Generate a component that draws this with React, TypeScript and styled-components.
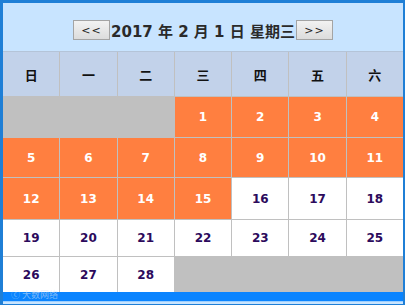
import React from "react";
import styled, { createGlobalStyle } from "styled-components";

const Global = createGlobalStyle`
  html, body { margin: 0; padding: 0; background: #ffffff; }
  * { box-sizing: border-box; }
`;

const Frame = styled.div`
  width: 405px;
  height: 305px;
  border-left: 3px solid #1f7fd6;
  border-top: 3px solid #1f7fd6;
  border-right: 2px solid #1f7fd6;
  border-bottom: 1px solid #1f7fd6;
  display: flex;
  flex-direction: column;
  position: relative;
  background: #c8e4ff;
`;

const Header = styled.div`
  height: 49px;
  display: flex;
  align-items: center;
  justify-content: center;
  background: #c8e4ff;
  border-bottom: 1px solid #b4c4d8;
  padding-top: 6px;
`;

const NavButton = styled.button`
  width: 37px;
  height: 20px;
  padding: 0;
  border: 1px solid #a4a4a4;
  background: linear-gradient(#f2f2f2, #dcdcdc);
  font-family: "DejaVu Sans", Verdana, sans-serif;
  font-size: 11px;
  letter-spacing: 1px;
  color: #222;
  display: flex;
  align-items: center;
  justify-content: center;
`;

const Title = styled.span`
  font-family: "DejaVu Sans", "Noto Sans CJK SC", sans-serif;
  font-weight: bold;
  font-size: 15px;
  color: #2a2a2a;
  margin: 0 1px;
  white-space: nowrap;
`;

const Grid = styled.div`
  display: grid;
  grid-template-columns: repeat(7, 1fr);
  grid-template-rows: 44px 40px 39px 41px 36px 35px;
  gap: 1px;
  background: #c0c0c0;
`;

const WeekCell = styled.div`
  background: #c2d2ea;
  display: flex;
  align-items: center;
  justify-content: center;
  font-family: "Noto Sans CJK SC", sans-serif;
  font-weight: bold;
  font-size: 13px;
  color: #111;
`;

type Kind = "empty" | "past" | "future";

const DayCell = styled.div<{ $kind: Kind }>`
  background: ${(p) =>
    p.$kind === "empty" ? "#c0c0c0" : p.$kind === "past" ? "#ff7f40" : "#ffffff"};
  color: ${(p) => (p.$kind === "past" ? "#ffffff" : "#2c0a5c")};
  display: flex;
  align-items: center;
  justify-content: center;
  font-family: "DejaVu Sans", Verdana, sans-serif;
  font-weight: bold;
  font-size: 12px;
`;

const Footer = styled.div`
  height: 10px;
  background: #0a84ff;
  border-bottom: 1px solid #9ccfff;
`;

const Watermark = styled.span`
  position: absolute;
  left: 8px;
  bottom: 3px;
  font-family: "Noto Sans CJK SC", sans-serif;
  font-size: 9px;
  color: rgba(220, 230, 245, 0.55);
`;

const weekdays = ["日", "一", "二", "三", "四", "五", "六"];

export default function App() {
  const cells: { day: number | null; kind: Kind }[] = [];
  for (let i = 0; i < 3; i++) cells.push({ day: null, kind: "empty" });
  for (let d = 1; d <= 28; d++) cells.push({ day: d, kind: d <= 15 ? "past" : "future" });
  while (cells.length < 35) cells.push({ day: null, kind: "empty" });

  return (
    <>
      <Global />
      <Frame>
        <Header>
          <NavButton>&lt;&lt;</NavButton>
          <Title>2017 年 2 月 1 日 星期三</Title>
          <NavButton>&gt;&gt;</NavButton>
        </Header>
        <Grid>
          {weekdays.map((w) => (
            <WeekCell key={w}>{w}</WeekCell>
          ))}
          {cells.map((c, i) => (
            <DayCell key={i} $kind={c.kind}>
              {c.day ?? ""}
            </DayCell>
          ))}
        </Grid>
        <Footer />
        <Watermark>ⓒ 大数网络</Watermark>
      </Frame>
    </>
  );
}
